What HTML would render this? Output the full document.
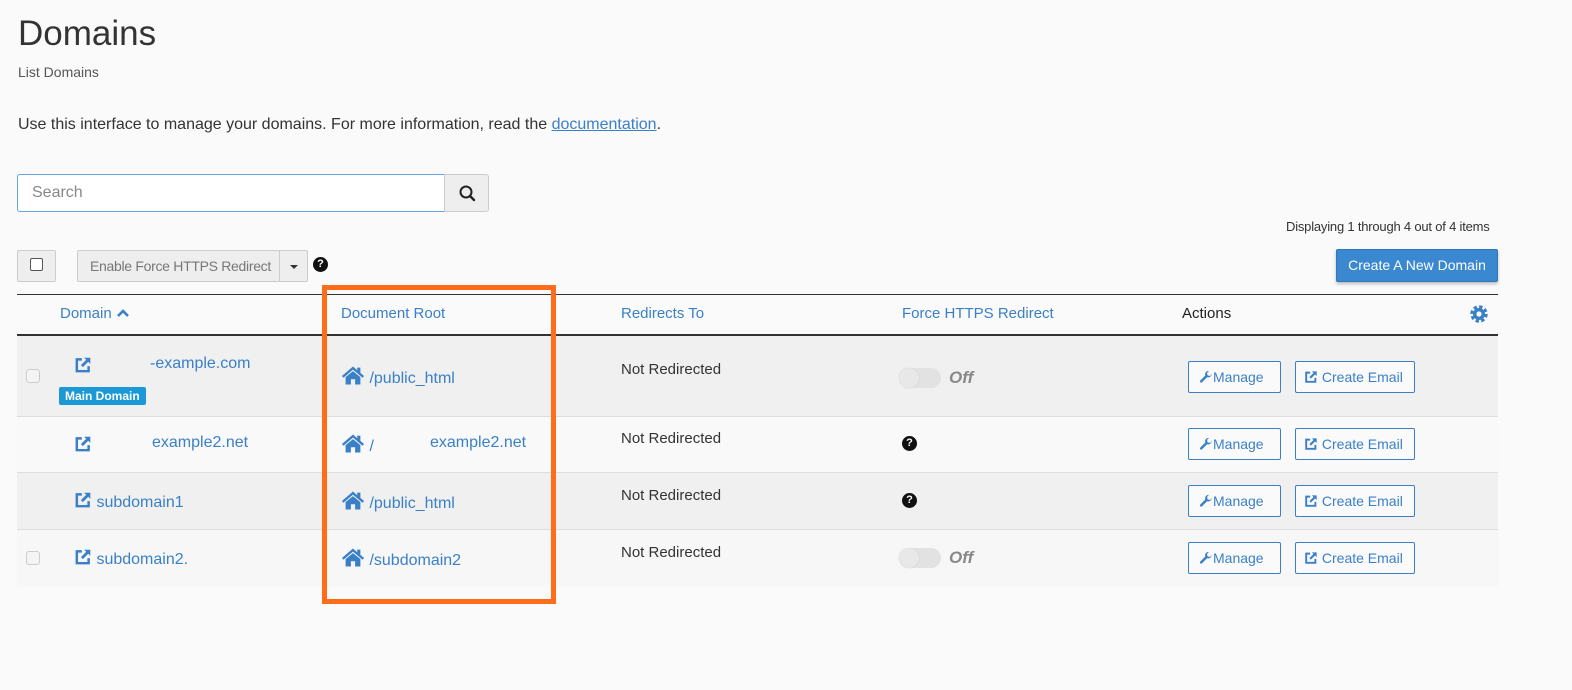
<!DOCTYPE html>
<html><head><meta charset="utf-8"><style>
*{box-sizing:border-box}
body{margin:0;width:1572px;height:690px;background:#fafafa;font-family:"Liberation Sans",sans-serif;color:#333;position:relative;overflow:hidden}
.a{position:absolute;white-space:nowrap}
.blue{color:#3a80c8}
.btn{position:absolute;border:1px solid #3a80c8;border-radius:2px;color:#3a80c8;font-size:14px;height:32px;line-height:30px;padding:0 10px;background:#fafafa}
.row{position:absolute;left:17px;width:1481px;border-bottom:1px solid #ddd}
.cb{position:absolute;width:14px;height:14px;border:1px solid #ccc;border-radius:3px;background:#f4f4f4}
.tog{position:absolute;width:42px;height:20px;border-radius:10px;background:#e2e2e2}
.tog:before{content:"";position:absolute;left:0;top:0;width:20px;height:20px;border-radius:50%;background:#e8e8e8;box-shadow:0 0 1px #bbb}
.off{position:absolute;font-style:italic;font-weight:bold;color:#888;font-size:17px}
.q{position:absolute;width:15px;height:15px;border-radius:50%;background:#111;color:#fff;font-size:11px;font-weight:bold;text-align:center;line-height:15px}
svg.i{vertical-align:-2px}
</style></head><body>
<svg width="0" height="0" style="position:absolute"><defs>
<symbol id="ext" viewBox="0 0 16 16"><path d="M7 3H2.5v10.5H13V9" fill="none" stroke="#3a80c8" stroke-width="2.2"/><path d="M9 1.5h5.5V7z" fill="#3a80c8"/><path d="M13 3L7 9" stroke="#3a80c8" stroke-width="2.4"/></symbol>
<symbol id="home" viewBox="0 0 22 18"><path d="M11 0.5L0.5 9.5l1.5 1.6L11 3.4l9 7.7 1.5-1.6L18 6.5V1.5h-3v2.5z" fill="#3a80c8"/><path d="M4 10.5L11 4.8l7 5.7V17.5h-5v-5H9v5H4z" fill="#3a80c8"/></symbol>
<symbol id="wr" viewBox="0 0 16 16"><path d="M14.5 4.5a4 4 0 0 1-5.3 3.8L3.5 14a1.4 1.4 0 0 1-2-2l5.7-5.7A4 4 0 0 1 11.5 1l-2.3 2.3.6 2.9 2.9.6z" fill="#3a80c8"/></symbol>
</defs></svg>
<div class="a" style="left:18px;top:14px;font-size:35px;color:#333">Domains</div>
<div class="a" style="left:18px;top:64px;font-size:14px;color:#555">List Domains</div>
<div class="a" style="left:18px;top:116px;font-size:16px">Use this interface to manage your domains. For more information, read the <span class="blue" style="text-decoration:underline">documentation</span>.</div>
<div class="a" style="left:17px;top:174px;width:428px;height:38px;border:1px solid #66a3e0;border-radius:3px 0 0 3px;background:#fff;font-size:16px;color:#888;line-height:36px;padding-left:14px">Search</div>
<div class="a" style="left:444px;top:174px;width:45px;height:38px;border:1px solid #ccc;background:#eee;border-radius:0 3px 3px 0"><svg width="45" height="38" viewBox="0 0 45 38"><circle cx="21" cy="17" r="5.5" fill="none" stroke="#222" stroke-width="2"/><path d="M25 21l4 4" stroke="#222" stroke-width="2.4" stroke-linecap="round"/></svg></div>
<div class="a" style="left:1286px;top:219px;font-size:13px;letter-spacing:-0.2px">Displaying 1 through 4 out of 4 items</div>
<div class="a" style="left:17px;top:250px;width:39px;height:32px;border:1px solid #ccc;border-radius:2px;background:#eee"><div class="cb" style="left:12px;top:7px;width:13px;height:13px;border-color:#555;background:#fff;border-radius:2px"></div></div>
<div class="a" style="left:77px;top:250px;width:231px;height:32px;border:1px solid #ccc;border-radius:2px;background:#eee;color:#777;font-size:14px;line-height:30px;padding-left:12px;letter-spacing:-0.3px">Enable Force HTTPS Redirect<div style="position:absolute;left:201px;top:0;width:1px;height:30px;background:#ccc"></div><div style="position:absolute;left:212px;top:14px;border:4px solid transparent;border-top-color:#333"></div></div>
<div class="q" style="left:313px;top:257px;width:15px;height:15px">?</div>
<div class="a" style="left:1336px;top:249px;width:162px;height:33px;background:#3a88d0;border:1px solid #2f77bb;border-radius:2px;color:#fff;font-size:14px;line-height:31px;text-align:center;box-shadow:0 2px 3px rgba(0,0,0,.25)">Create A New Domain</div>
<div class="a" style="left:17px;top:294px;width:1481px;height:1px;background:#333"></div>
<div class="a" style="left:17px;top:334px;width:1481px;height:2px;background:#333"></div>
<div class="a blue" style="left:60px;top:305px;font-size:15px">Domain <svg width="14" height="10" viewBox="0 0 14 10"><path d="M2 8l5-5 5 5" fill="none" stroke="#3a80c8" stroke-width="2.6"/></svg></div>
<div class="a blue" style="left:341px;top:305px;font-size:15px">Document Root</div>
<div class="a blue" style="left:621px;top:305px;font-size:15px">Redirects To</div>
<div class="a blue" style="left:902px;top:305px;font-size:15px">Force HTTPS Redirect</div>
<div class="a" style="left:1182px;top:305px;font-size:15px;color:#222">Actions</div>
<svg class="a" style="left:1469px;top:304px" width="20" height="20" viewBox="0 0 20 20"><circle cx="10" cy="10" r="6.5" fill="none" stroke="#3a80c8" stroke-width="4.5" stroke-dasharray="3 2.1"/><circle cx="10" cy="10" r="6" fill="#3a80c8"/><circle cx="10" cy="10" r="2.6" fill="#fafafa"/></svg>

<div class="row" style="top:336px;height:81px;background:#f0f0f0"></div>
<div class="row" style="top:417px;height:56px;background:#f9f9f9"></div>
<div class="row" style="top:473px;height:57px;background:#f0f0f0"></div>
<div class="row" style="top:530px;height:57px;background:#f7f7f7;border:none"></div>

<div class="cb" style="left:26px;top:369px"></div>
<div class="cb" style="left:26px;top:551px"></div>

<svg class="a" style="left:74px;top:356px" width="18" height="18"><use href="#ext"/></svg>
<div class="a blue" style="left:150px;top:355px;font-size:16px">-example.com</div>
<div class="a" style="left:59px;top:387px;background:#1b99d6;color:#fff;font-size:12px;font-weight:bold;padding:2px 6px;border-radius:2px">Main Domain</div>
<svg class="a" style="left:74px;top:435px" width="18" height="18"><use href="#ext"/></svg>
<div class="a blue" style="left:152px;top:434px;font-size:16px">example2.net</div>
<div class="a blue" style="left:74px;top:491px;font-size:16px"><svg class="i" width="18" height="18"><use href="#ext"/></svg> subdomain1</div>
<div class="a blue" style="left:74px;top:548px;font-size:16px"><svg class="i" width="18" height="18"><use href="#ext"/></svg> subdomain2.</div>

<div class="a blue" style="left:341px;top:366px;font-size:16px"><svg class="i" width="24" height="19"><use href="#home"/></svg> /public_html</div>
<div class="a blue" style="left:341px;top:434px;font-size:16px"><svg class="i" width="24" height="19"><use href="#home"/></svg> /</div>
<div class="a blue" style="left:430px;top:434px;font-size:16px">example2.net</div>
<div class="a blue" style="left:341px;top:491px;font-size:16px"><svg class="i" width="24" height="19"><use href="#home"/></svg> /public_html</div>
<div class="a blue" style="left:341px;top:548px;font-size:16px"><svg class="i" width="24" height="19"><use href="#home"/></svg> /subdomain2</div>

<div class="a" style="left:621px;top:361px;font-size:15px">Not Redirected</div>
<div class="a" style="left:621px;top:430px;font-size:15px">Not Redirected</div>
<div class="a" style="left:621px;top:487px;font-size:15px">Not Redirected</div>
<div class="a" style="left:621px;top:544px;font-size:15px">Not Redirected</div>

<div class="tog" style="left:899px;top:368px"></div><div class="off" style="left:949px;top:368px">Off</div>
<div class="q" style="left:902px;top:436px">?</div>
<div class="q" style="left:902px;top:493px">?</div>
<div class="tog" style="left:899px;top:548px"></div><div class="off" style="left:949px;top:548px">Off</div>

<div class="btn" style="left:1188px;top:361px;width:93px"><svg class="i" width="14" height="14"><use href="#wr"/></svg>Manage</div><div class="btn" style="left:1295px;top:361px;width:120px;padding:0 8px"><svg class="i" width="14" height="14"><use href="#ext"/></svg> Create Email</div>
<div class="btn" style="left:1188px;top:428px;width:93px"><svg class="i" width="14" height="14"><use href="#wr"/></svg>Manage</div><div class="btn" style="left:1295px;top:428px;width:120px;padding:0 8px"><svg class="i" width="14" height="14"><use href="#ext"/></svg> Create Email</div>
<div class="btn" style="left:1188px;top:485px;width:93px"><svg class="i" width="14" height="14"><use href="#wr"/></svg>Manage</div><div class="btn" style="left:1295px;top:485px;width:120px;padding:0 8px"><svg class="i" width="14" height="14"><use href="#ext"/></svg> Create Email</div>
<div class="btn" style="left:1188px;top:542px;width:93px"><svg class="i" width="14" height="14"><use href="#wr"/></svg>Manage</div><div class="btn" style="left:1295px;top:542px;width:120px;padding:0 8px"><svg class="i" width="14" height="14"><use href="#ext"/></svg> Create Email</div>

<div class="a" style="left:322px;top:285px;width:234px;height:319px;border:5px solid #ff6c1a"></div>
</body></html>
